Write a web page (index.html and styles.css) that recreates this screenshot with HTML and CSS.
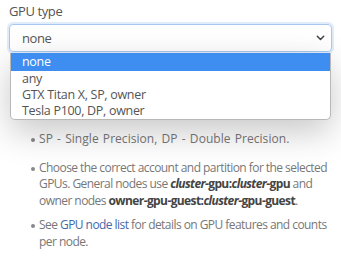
FILE: index.html
```html
<!DOCTYPE html>
<html>
<head>
<meta charset="utf-8">
<link rel="stylesheet" href="styles.css">
</head>
<body>
<div class="page">
  <div class="label">GPU type</div>
  <div class="field">
    <div class="select">
      <span>none</span>
      <svg class="chev" width="9" height="6" viewBox="0 0 9 6"><path d="M1.3 1.3 L4.5 4.5 L7.7 1.3" fill="none" stroke="#444" stroke-width="1.5" stroke-linecap="round" stroke-linejoin="round"/></svg>
    </div>
    <div class="menu">
      <div class="opt active">none</div>
      <div class="opt">any</div>
      <div class="opt">GTX Titan X, SP, owner</div>
      <div class="opt">Tesla P100, DP, owner</div>
    </div>
  </div>
  <ul class="notes">
    <li class="first">SP - Single Precision, DP - Double Precision.</li>
    <li>Choose the correct account and partition for the selected<br>GPUs. General nodes use <b><i>cluster</i>-gpu:<i>cluster</i>-gpu</b> and<br>owner nodes <b>owner-gpu-guest:<i>cluster</i>-gpu-guest</b>.</li>
    <li>See <a href="#">GPU node list</a> for details on GPU features and counts<br>per node.</li>
  </ul>
</div>
</body>
</html>
```
FILE: styles.css
```css
html, body { margin: 0; padding: 0; background: #fff; }
body { font-family: "Open Sans", "Noto Sans", sans-serif; color: #666; }
.page { padding: 2px 9px 0 9px; }
.label { font-size: 13px; letter-spacing: -0.4px; line-height: 18px; color: #555; margin-bottom: 4px; }
.field { position: relative; }
.select {
  height: 26px; border: 1px solid #a9c7ee; border-radius: 4px;
  box-shadow: 0 0 0 2px rgba(170,200,240,0.35);
  display: flex; align-items: center; justify-content: space-between;
  padding: 0 6px 0 12px; font-size: 13px; letter-spacing: -0.4px; color: #555; box-sizing: content-box;
}
.chev { display: block; }
.menu {
  position: absolute; left: 1px; right: 1px; top: 29px;
  background: #fff; border: 1px solid #b8b8b8; border-top: none;
  border-radius: 0 0 5px 5px; overflow: hidden;
  box-shadow: 0 12px 34px rgba(0,0,0,0.22);
  z-index: 2;
}
.opt { font-size: 12.5px; letter-spacing: -0.3px; line-height: 16px; padding: 0 11px; color: #555; }
.opt.active { background: #3d8ef0; color: #fff; line-height: 18px; }
.notes { list-style: none; margin: 0; padding: 0 0 0 23px; font-size: 12px; letter-spacing: -0.55px; line-height: 16.5px; color: #777; }
.notes li { position: relative; padding-left: 7px; margin-top: 8px; white-space: nowrap; }
.notes li.first { margin-top: 79px; margin-bottom: 12px; letter-spacing: 0.05px; word-spacing: 1px; }
.notes li::before { content: ""; position: absolute; left: -1px; top: 7px; width: 4px; height: 4px; border-radius: 50%; background: #888; }
.notes b { color: #444; letter-spacing: -0.6px; }
.notes a { color: #3f6aa8; text-decoration: none; }
```
